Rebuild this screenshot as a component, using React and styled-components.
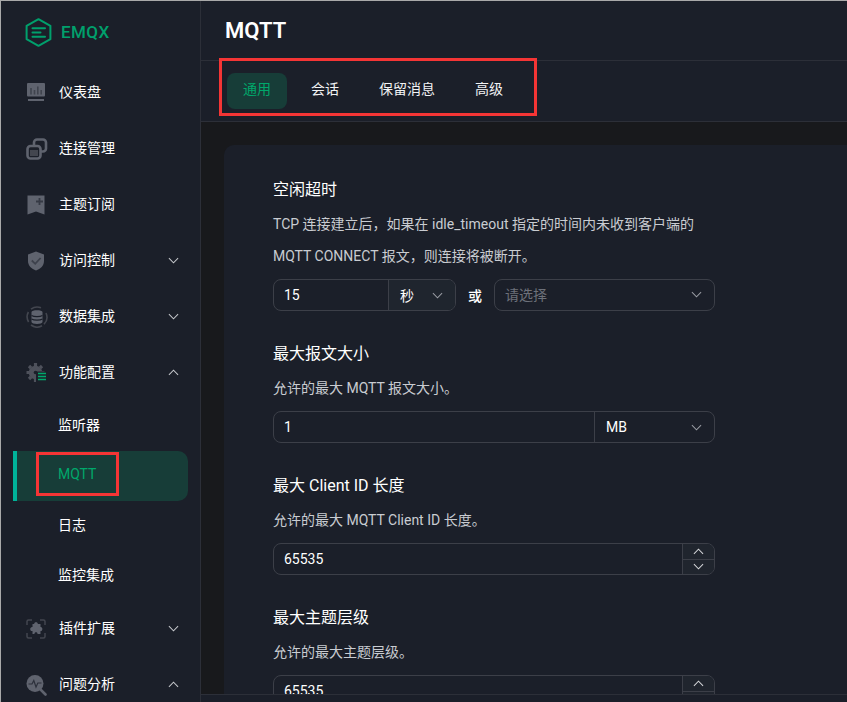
import React from 'react'
import styled, { createGlobalStyle } from 'styled-components'

const GlobalStyle = createGlobalStyle`
  html, body {
    margin: 0;
    height: 100%;
    background: #a9a9a9;
    overflow: hidden;
  }
  * {
    box-sizing: border-box;
  }
  #root {
    height: 100%;
    padding: 1px 0 0 1px;
    font-family: Roboto, "Noto Sans CJK SC", sans-serif;
    font-size: 14px;
    color: #fff;
  }
`

const Shell = styled.div`
  display: flex;
  height: 100%;
  background: #1b1f29;
  overflow: hidden;
`

const Sidebar = styled.aside`
  flex: 0 0 200px;
  border-right: 1px solid #2c2f38;
  overflow: hidden;
`

const Logo = styled.div`
  display: flex;
  align-items: center;
  gap: 9px;
  height: 64px;
  padding: 0 0 2px 24px;
  color: #00a06c;
  font-size: 17px;
  font-weight: 500;
  letter-spacing: 0.4px;
`

const NavRow = styled.div`
  display: flex;
  align-items: center;
  height: 56px;
  padding: 0 21px 0 25px;
`

const NavIcon = styled.span`
  display: flex;
  flex: 0 0 33px;
  color: #5f636e;
`

const NavLabel = styled.span`
  flex: 1;
  padding-bottom: 4px;
  color: #fff;
`

const NavChevron = styled.span`
  display: flex;
  padding-bottom: 2px;
  color: #c6c8cc;
`

const SubRow = styled.div`
  position: relative;
  display: flex;
  align-items: center;
  height: 50px;
  margin: 0 12px;
  padding-left: ${props => props.active ? '41px' : '45px'};
  padding-bottom: 4px;
  color: ${props => props.active ? '#00a86b' : '#fff'};
  background: ${props => props.active ? '#173d38' : 'transparent'};
  border-left: ${props => props.active ? '4px solid #00b299' : '0'};
  border-radius: ${props => props.active ? '0 10px 10px 0' : '0'};
`

const Annotation = styled.span`
  position: absolute;
  border: 3px solid #f53535;
  pointer-events: none;
`

const MqttMark = styled(Annotation)`
  left: 19px;
  top: 1px;
  width: 83px;
  height: 44px;
`

const TabsMark = styled(Annotation)`
  left: 18px;
  top: -3px;
  width: 318px;
  height: 58px;
`

const Main = styled.main`
  display: flex;
  flex: 1;
  flex-direction: column;
  min-width: 0;
`

const Header = styled.header`
  display: flex;
  flex: 0 0 60px;
  align-items: center;
  padding-left: 24px;
  border-bottom: 1px solid #2c2f38;
  font-size: 22px;
  font-weight: 600;
`

const Tabs = styled.nav`
  position: relative;
  display: flex;
  flex: 0 0 61px;
  align-items: center;
  gap: 8px;
  padding: 0 26px 1px;
  border-bottom: 1px solid #2c2f38;
`

const Tab = styled.div`
  height: 36px;
  padding: 0 16px;
  border-radius: 8px;
  line-height: 33px;
  color: ${props => props.active ? '#00a86b' : '#f2f3f4'};
  background: ${props => props.active ? '#173d38' : 'transparent'};
`

const Content = styled.div`
  flex: 1;
  min-height: 0;
  padding: 23px 0 0 23px;
  background: #18191c;
  overflow: hidden;
`

const Card = styled.section`
  padding: 33px 0 0 49px;
  background: #1b1f29;
  border-radius: 10px 0 0 0;
`

const Field = styled.div`
  width: 442px;
  margin-bottom: 31px;
`

const FieldTitle = styled.div`
  height: 24px;
  margin-bottom: 6px;
  font-size: 16px;
  line-height: 24px;
  color: #fff;
`

const FieldDesc = styled.div`
  margin-bottom: 7px;
  line-height: 32px;
  color: #c9ccd1;
`

const Controls = styled.div`
  display: flex;
  align-items: center;
`

const Group = styled.div`
  display: flex;
  flex: 0 0 ${props => props.width || '100%'};
  height: 32px;
  border: 1px solid #3c3f48;
  border-radius: 8px;
  overflow: hidden;
`

const Input = styled.input`
  flex: 1;
  min-width: 0;
  padding: 0 10px;
  border: 0;
  outline: 0;
  background: transparent;
  color: #fff;
  font: inherit;
`

const Addon = styled.div`
  display: flex;
  flex: 0 0 ${props => props.width};
  align-items: center;
  justify-content: space-between;
  padding: 0 12px 0 11px;
  border-left: 1px solid #3c3f48;
  background: ${props => props.tinted ? '#1f252e' : 'transparent'};
  color: #fff;
  svg {
    color: #9a9da4;
  }
`

const Or = styled.span`
  flex: 0 0 38px;
  text-align: center;
  font-weight: 500;
`

const Select = styled.div`
  display: flex;
  flex: 1;
  align-items: center;
  justify-content: space-between;
  height: 32px;
  padding: 0 12px 2px 10px;
  border: 1px solid #3c3f48;
  border-radius: 8px;
  color: #6d717a;
  svg {
    color: #9a9da4;
  }
`

const Stepper = styled.div`
  display: flex;
  flex: 0 0 32px;
  flex-direction: column;
  border-left: 1px solid #3c3f48;
  background: #20252e;
`

const StepButton = styled.div`
  display: flex;
  flex: 1;
  align-items: center;
  justify-content: center;
  color: #d5d7da;
  & + & {
    border-top: 1px solid #3c3f48;
  }
`

const SaveBar = styled.footer`
  flex: 0 0 8px;
  border-top: 1px solid #2c2f38;
  background: #1b1f29;
`

const Chevron = ({ up, size = 11 }) => (
  <svg width={size} height={size} viewBox="0 0 12 12" fill="none" stroke="currentColor" strokeWidth="1.1">
    <path d={up ? 'M1 8.5 6 3.5 11 8.5' : 'M1 3.5 6 8.5 11 3.5'} />
  </svg>
)

const LogoMark = () => (
  <svg width="27" height="29" viewBox="0 0 27 29" fill="none" stroke="#00a06c" strokeWidth="2">
    <path d="M13.5 1.2 25.4 7.8V21.2L13.5 27.8 1.6 21.2V7.8Z" strokeLinejoin="round" />
    <path d="M7.5 10.2H20M7.5 14.5H15.5M7.5 18.8H20" strokeLinecap="round" />
  </svg>
)

const DashboardIcon = () => (
  <svg width="20" height="20" viewBox="0 0 20 20">
    <rect x="1" y="0" width="18" height="13.5" rx="1" fill="currentColor" />
    <path d="M5 5V11.5M8.5 7V11.5M11.8 3.5V11.5M15.2 7V11.5" stroke="#1b1f29" strokeOpacity=".45" strokeWidth="1.6" />
    <rect x="2" y="16" width="16" height="2" fill="currentColor" />
  </svg>
)

const ConnectIcon = () => (
  <svg width="22" height="22" viewBox="0 0 22 22" fill="none" stroke="#5f636e" strokeWidth="2.6">
    <rect x="8" y="1.5" width="12" height="12" rx="3" />
    <rect x="1.5" y="8" width="13" height="12.5" rx="3" fill="#1b1f29" />
    <rect x="4" y="12" width="8" height="6" fill="#43464f" stroke="none" />
  </svg>
)

const SubscribeIcon = () => (
  <svg width="20" height="20" viewBox="0 0 20 20">
    <path d="M1.5 0.5H18.5V19.5L10 16.5 1.5 19.5Z" fill="currentColor" />
    <path d="M13.5 3V10M10 6.5H17" stroke="#1b1f29" strokeOpacity=".6" strokeWidth="1.8" />
  </svg>
)

const ShieldIcon = () => (
  <svg width="20" height="20" viewBox="0 0 20 20">
    <path d="M10 0.5 18 3.5V10C18 14.8 14.5 18 10 19.5 5.5 18 2 14.8 2 10V3.5Z" fill="currentColor" />
    <path d="M5.8 9.5 9.2 12.8 14.6 7" fill="none" stroke="#1b1f29" strokeOpacity=".5" strokeWidth="1.8" />
  </svg>
)

const IntegrationIcon = () => (
  <svg width="22" height="22" viewBox="0 0 22 22" fill="none">
    <path d="M5 3.2A10 10 0 0 1 15 1.8M20 7A10 10 0 0 1 18 18.2M16 19.8A10 10 0 0 1 5 19M2.6 16A10 10 0 0 1 2.4 6" stroke="#43464f" strokeWidth="1.6" />
    <path d="M5.5 6C5.5 3.5 16.5 3.5 16.5 6V16C16.5 18.5 5.5 18.5 5.5 16Z" fill="#5f636e" />
    <path d="M5.5 9.5C8 11 14 11 16.5 9.5M5.5 13C8 14.5 14 14.5 16.5 13" stroke="#1b1f29" strokeWidth="1.1" />
  </svg>
)

const ConfigIcon = () => (
  <svg width="22" height="22" viewBox="0 0 22 22" fill="none">
    <circle cx="9.5" cy="10.5" r="6.8" fill="#4e515b" />
    <circle cx="9.5" cy="10.5" r="1.8" fill="#1b1f29" />
    <path d="M9.5 1V4M9.5 17V20M0.5 10.5H3.5M15.5 10.5H18.5M3 4 5 6M14 15 16 17M16 4 14 6M5 15 3 17" stroke="#4e515b" strokeWidth="3.2" />
    <rect x="10" y="9.5" width="11" height="10.5" fill="#1b1f29" />
    <path d="M12 11.5H20M12 14.5H20M12 17.5H20" stroke="#00a86b" strokeWidth="1.7" />
  </svg>
)

const PluginIcon = () => (
  <svg width="20" height="20" viewBox="0 0 20 20" fill="none">
    <path d="M1 6V2.5Q1 1 2.5 1H6M14 1H17.5Q19 1 19 2.5V6M19 14V17.5Q19 19 17.5 19H14M6 19H2.5Q1 19 1 17.5V14" stroke="#43464f" strokeWidth="1.5" />
    <path d="M6.5 5H8.2C7.8 2.6 12.2 2.6 11.8 5H14.5V8C17 7.6 17 12.4 14.5 12V15H11.5C11.9 12.8 8.1 12.8 8.5 15H6.5V12C3.5 12.6 3.5 7.6 6.5 8Z" fill="#5f636e" />
  </svg>
)

const AnalysisIcon = () => (
  <svg width="22" height="22" viewBox="0 0 22 22" fill="none">
    <path d="M14 15 19.5 20.5" stroke="#5f636e" strokeWidth="2.6" strokeLinecap="round" />
    <circle cx="9" cy="9.5" r="8.5" fill="#5f636e" />
    <path d="M2.5 10H6L7.8 6.5 10 13 11.8 9H15.5" stroke="#1b1f29" strokeOpacity=".75" strokeWidth="1.2" />
  </svg>
)

const NavItem = ({ icon, label, chevron }) => (
  <NavRow>
    <NavIcon>{icon}</NavIcon>
    <NavLabel>{label}</NavLabel>
    {chevron && <NavChevron><Chevron up={chevron === 'up'} /></NavChevron>}
  </NavRow>
)

const NumberField = ({ title, desc, value }) => (
  <Field>
    <FieldTitle>{title}</FieldTitle>
    <FieldDesc>{desc}</FieldDesc>
    <Group>
      <Input defaultValue={value} />
      <Stepper>
        <StepButton><Chevron up /></StepButton>
        <StepButton><Chevron /></StepButton>
      </Stepper>
    </Group>
  </Field>
)

export default function App () {
  return (
    <Shell>
      <GlobalStyle />
      <Sidebar>
        <Logo><LogoMark />EMQX</Logo>
        <NavItem icon={<DashboardIcon />} label="仪表盘" />
        <NavItem icon={<ConnectIcon />} label="连接管理" />
        <NavItem icon={<SubscribeIcon />} label="主题订阅" />
        <NavItem icon={<ShieldIcon />} label="访问控制" chevron="down" />
        <NavItem icon={<IntegrationIcon />} label="数据集成" chevron="down" />
        <NavItem icon={<ConfigIcon />} label="功能配置" chevron="up" />
        <SubRow>监听器</SubRow>
        <SubRow active>MQTT<MqttMark /></SubRow>
        <SubRow>日志</SubRow>
        <SubRow>监控集成</SubRow>
        <NavItem icon={<PluginIcon />} label="插件扩展" chevron="down" />
        <NavItem icon={<AnalysisIcon />} label="问题分析" chevron="up" />
      </Sidebar>
      <Main>
        <Header>MQTT</Header>
        <Tabs>
          <Tab active>通用</Tab>
          <Tab>会话</Tab>
          <Tab>保留消息</Tab>
          <Tab>高级</Tab>
          <TabsMark />
        </Tabs>
        <Content>
          <Card>
            <Field>
              <FieldTitle>空闲超时</FieldTitle>
              <FieldDesc>
                TCP 连接建立后，如果在 idle_timeout 指定的时间内未收到客户端的<br />
                MQTT CONNECT 报文，则连接将被断开。
              </FieldDesc>
              <Controls>
                <Group width="183px">
                  <Input defaultValue="15" />
                  <Addon width="67px" tinted>秒<Chevron /></Addon>
                </Group>
                <Or>或</Or>
                <Select>请选择<Chevron /></Select>
              </Controls>
            </Field>
            <Field>
              <FieldTitle>最大报文大小</FieldTitle>
              <FieldDesc>允许的最大 MQTT 报文大小。</FieldDesc>
              <Group>
                <Input defaultValue="1" />
                <Addon width="120px">MB<Chevron /></Addon>
              </Group>
            </Field>
            <NumberField title="最大 Client ID 长度" desc="允许的最大 MQTT Client ID 长度。" value="65535" />
            <NumberField title="最大主题层级" desc="允许的最大主题层级。" value="65535" />
          </Card>
        </Content>
        <SaveBar />
      </Main>
    </Shell>
  )
}
